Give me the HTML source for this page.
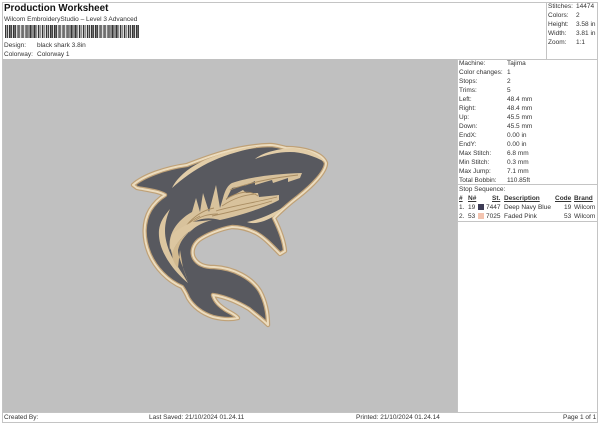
<!DOCTYPE html>
<html><head><meta charset="utf-8"><style>
html,body{margin:0;padding:0;background:#fff}
body{width:600px;height:424px;position:relative;overflow:hidden;font-family:"Liberation Sans",sans-serif;font-size:6.5px;color:#333}
.t{position:absolute;white-space:nowrap;line-height:9px}
.l{position:absolute;background:#c4c4c4}
</style></head><body>
<div class="l" style="left:2px;top:2px;width:596px;height:1px"></div>
<div class="l" style="left:2px;top:2px;width:1px;height:420px"></div>
<div class="l" style="left:597px;top:2px;width:1px;height:420px"></div>
<div class="l" style="left:2px;top:422px;width:596px;height:1px"></div>
<div class="l" style="left:546px;top:2px;width:1px;height:57px"></div>
<div class="l" style="left:2px;top:59px;width:596px;height:1px"></div>
<div class="l" style="left:2px;top:412px;width:596px;height:1px"></div>
<div class="l" style="left:457px;top:60px;width:1px;height:352px"></div>
<div class="l" style="left:458px;top:184px;width:139px;height:1px"></div>
<div class="l" style="left:458px;top:221px;width:139px;height:1px"></div>
<div style="position:absolute;left:3px;top:59px;width:454px;height:353px;background:#c0c0c0"></div>

<div class="t" style="left:4px;top:3px;font-size:9.8px;font-weight:bold;line-height:12px;color:#111">Production Worksheet</div>
<div class="t" style="left:4px;top:15px;">Wilcom EmbroideryStudio – Level 3 Advanced</div>
<div style="position:absolute;left:5px;top:25px;width:134px;height:13px;background:repeating-linear-gradient(90deg,#333 0,#333 1.2px,#aaa 1.2px,#aaa 2px,#444 2px,#444 2.8px,#ddd 2.8px,#ddd 4.1px)"></div>
<div class="t" style="left:4px;top:41px;">Design:</div><div class="t" style="left:37px;top:41px;">black shark 3.8in</div>
<div class="t" style="left:4px;top:50px;">Colorway:</div><div class="t" style="left:37px;top:50px;">Colorway 1</div>

<div class="t" style="left:548px;top:2px">Stitches:</div><div class="t" style="left:576px;top:2px">14474</div>
<div class="t" style="left:548px;top:11px">Colors:</div><div class="t" style="left:576px;top:11px">2</div>
<div class="t" style="left:548px;top:20px">Height:</div><div class="t" style="left:576px;top:20px">3.58 in</div>
<div class="t" style="left:548px;top:29px">Width:</div><div class="t" style="left:576px;top:29px">3.81 in</div>
<div class="t" style="left:548px;top:38px">Zoom:</div><div class="t" style="left:576px;top:38px">1:1</div>

<div class="t" style="left:459px;top:59px">Machine:</div><div class="t" style="left:507px;top:59px">Tajima</div>
<div class="t" style="left:459px;top:68px">Color changes:</div><div class="t" style="left:507px;top:68px">1</div>
<div class="t" style="left:459px;top:77px">Stops:</div><div class="t" style="left:507px;top:77px">2</div>
<div class="t" style="left:459px;top:86px">Trims:</div><div class="t" style="left:507px;top:86px">5</div>
<div class="t" style="left:459px;top:95px">Left:</div><div class="t" style="left:507px;top:95px">48.4 mm</div>
<div class="t" style="left:459px;top:104px">Right:</div><div class="t" style="left:507px;top:104px">48.4 mm</div>
<div class="t" style="left:459px;top:113px">Up:</div><div class="t" style="left:507px;top:113px">45.5 mm</div>
<div class="t" style="left:459px;top:122px">Down:</div><div class="t" style="left:507px;top:122px">45.5 mm</div>
<div class="t" style="left:459px;top:131px">EndX:</div><div class="t" style="left:507px;top:131px">0.00 in</div>
<div class="t" style="left:459px;top:140px">EndY:</div><div class="t" style="left:507px;top:140px">0.00 in</div>
<div class="t" style="left:459px;top:149px">Max Stitch:</div><div class="t" style="left:507px;top:149px">6.8 mm</div>
<div class="t" style="left:459px;top:158px">Min Stitch:</div><div class="t" style="left:507px;top:158px">0.3 mm</div>
<div class="t" style="left:459px;top:167px">Max Jump:</div><div class="t" style="left:507px;top:167px">7.1 mm</div>
<div class="t" style="left:459px;top:176px">Total Bobbin:</div><div class="t" style="left:507px;top:176px">110.85ft</div>
<div class="t" style="left:459px;top:185px">Stop Sequence:</div>

<div class="t" style="left:459px;top:194px;font-weight:bold;text-decoration:underline">#</div>
<div class="t" style="left:468px;top:194px;font-weight:bold;text-decoration:underline">N#</div>
<div class="t" style="left:492px;top:194px;font-weight:bold;text-decoration:underline">St.</div>
<div class="t" style="left:504px;top:194px;font-weight:bold;text-decoration:underline">Description</div>
<div class="t" style="left:555px;top:194px;font-weight:bold;text-decoration:underline">Code</div>
<div class="t" style="left:574px;top:194px;font-weight:bold;text-decoration:underline">Brand</div>

<div class="t" style="left:459px;top:203px">1.</div><div class="t" style="left:468px;top:203px">19</div>
<div style="position:absolute;left:478px;top:204px;width:6px;height:6px;background:#3c3b55"></div>
<div class="t" style="left:486px;top:203px">7447</div><div class="t" style="left:504px;top:203px">Deep Navy Blue</div>
<div class="t" style="left:564px;top:203px">19</div><div class="t" style="left:574px;top:203px">Wilcom</div>

<div class="t" style="left:459px;top:212px">2.</div><div class="t" style="left:468px;top:212px">53</div>
<div style="position:absolute;left:478px;top:213px;width:6px;height:6px;background:#f3c4b0"></div>
<div class="t" style="left:486px;top:212px">7025</div><div class="t" style="left:504px;top:212px">Faded Pink</div>
<div class="t" style="left:564px;top:212px">53</div><div class="t" style="left:574px;top:212px">Wilcom</div>

<div class="t" style="left:4px;top:413px">Created By:</div>
<div class="t" style="left:149px;top:413px">Last Saved: 21/10/2024 01.24.11</div>
<div class="t" style="left:356px;top:413px">Printed: 21/10/2024 01.24.14</div>
<div class="t" style="left:563px;top:413px">Page 1 of 1</div>

<svg width="600" height="424" style="position:absolute;left:0;top:0">
<path d="M133 185C143 176 165 168 187 165C205 158 235 146 270 145C276 145 281 147 286 148C304 148 322 153 326 163C326 172 312 186 298 197C290 203 282 210 274 218C279 228 284 240 285 251L280 254C272 246 265 238 256 233C248 229 240 227 232 227C220 229 206 235 199 240C193 245 191 252 194 258C198 265 205 267 214 267C234 268 252 278 260 291C266 302 268 314 268 325C262 319 256 315 249 309C239 303 226 297 213 295C215 302 220 306 226 310C231 313 236 315 238 318C230 320 221 319 213 317C204 314 194 308 188 298C186 293 184 290 182 287C168 281 155 268 149 253C143 238 143 222 150 210C155 202 160 198 165 195C158 191 147 190 137 188Z" fill="#58595f" stroke="#bfa177" stroke-width="4.4" stroke-linejoin="round"/>
<path d="M133 185C143 176 165 168 187 165C205 158 235 146 270 145C276 145 281 147 286 148C304 148 322 153 326 163C326 172 312 186 298 197C290 203 282 210 274 218C279 228 284 240 285 251L280 254C272 246 265 238 256 233C248 229 240 227 232 227C220 229 206 235 199 240C193 245 191 252 194 258C198 265 205 267 214 267C234 268 252 278 260 291C266 302 268 314 268 325C262 319 256 315 249 309C239 303 226 297 213 295C215 302 220 306 226 310C231 313 236 315 238 318C230 320 221 319 213 317C204 314 194 308 188 298C186 293 184 290 182 287C168 281 155 268 149 253C143 238 143 222 150 210C155 202 160 198 165 195C158 191 147 190 137 188Z" fill="none" stroke="#ecdcbe" stroke-width="2" stroke-linejoin="round"/>
<!-- back line -->
<path d="M172 188C178 176 190 167 205 160C222 153 240 148 256 146L256 147.5C238 151 222 156 208 163C194 170 182 179 172 188Z" fill="#e2cda8"/>
<path d="M255 159C262 153 276 149 292 148C305 148 318 153 325 162C314 156 302 152 290 152C278 152 266 155 255 159Z" fill="#e2cda8"/>
<!-- main band + teeth -->
<path d="M170 250C168 238 173 228 180 221C184 217 188 214 192 212L196 198L200 212L203 193L209 212L216 185L220 208L223 198C225 190 228 185 232 183C246 178 270 174 302 173L300 178L288 182L288 178L273 183L272 180L265 182L255 185L255 181L247 185L232 188L226 200L230 197L243 190L246 193L258 193L259 197L279 195L279 200C270 205 250 213 220 220C208 217 200 218 190 224C182 230 176 238 170 250Z" fill="#d8c29c"/>
<path d="M230 190C245 184 270 178 298 175M226 199C240 191 250 190 258 196M216 211C232 206 258 202 277 197M212 216C230 212 252 207 272 201M192 223C200 216 208 214 218 214M178 237C184 226 192 220 200 216M186 226C194 216 204 210 214 208M222 206C234 198 244 195 256 194" stroke="#a98d63" stroke-width=".9" fill="none"/>
<!-- chin line -->
<path d="M247 222C258 220 272 214 284 207C280 213 272 218 264 221C258 223 252 224 247 222Z" fill="#e2cda8"/>
<!-- left arc -->
<path d="M170 209C164 216 160 222 159 230C158 242 163 254 171 265C176 272 182 278 188 283C183 274 177 266 172 257C167 247 165 238 165 231C165 223 167 216 170 209Z" fill="#dcc6a0"/>
<!-- V lower -->
<path d="M190 232C182 236 176 244 172 252C172 258 174 264 178 268L180 250L183 268L188 282C184 268 178 258 178 250C180 242 184 236 192 230Z" fill="#d2b98f"/>
<path d="M172 235C170 241 170 248 172 254C174 246 182 236 192 230C196 226 204 222 212 220L192 222C184 226 176 230 172 235Z" fill="#dcc6a0"/>
</svg>
</body></html>
